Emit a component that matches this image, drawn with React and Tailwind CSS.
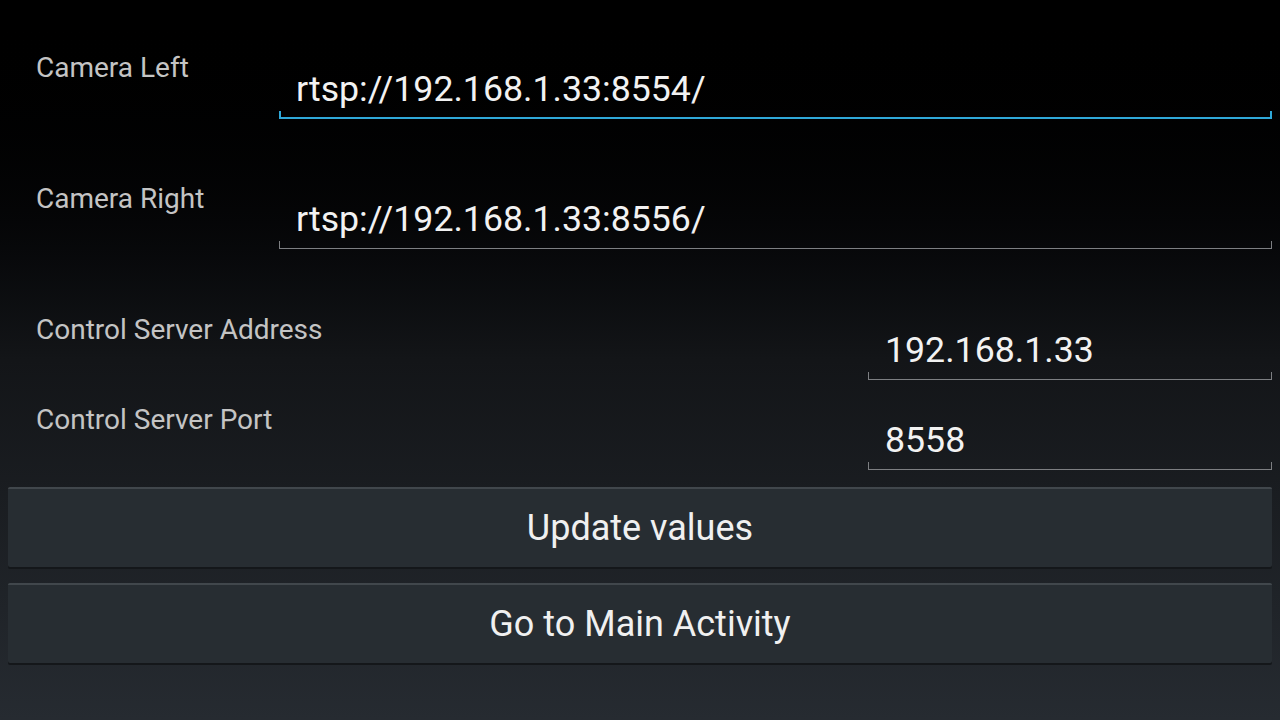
function Field({ value, focused, className }) {
  return (
    <div className={className}>
      <div className="pl-[17px] h-[44px] text-[35.7px] leading-[44px] text-[#f2f2f2] whitespace-nowrap">
        {value}
      </div>
      <div
        className={
          focused
            ? 'h-[8px] border-x-2 border-b-2 border-[#2fa8d8]'
            : 'h-[8px] border-x border-b border-[#7d7f82]'
        }
      />
    </div>
  );
}

function HoloButton({ label, className }) {
  return (
    <button
      className={
        'h-[80px] w-full flex items-center justify-center rounded-[2px] bg-[#272d32] border-t-2 border-[#41474c] shadow-[0_2px_0_#14171a] text-[36px] text-[#f0f0f0] ' +
        className
      }
    >
      {label}
    </button>
  );
}

export default function App() {
  return (
    <div
      className="w-[1280px] h-[720px] overflow-hidden bg-gradient-to-b from-[#000000] via-[#131518] to-[#262b31] pr-[8px]"
      style={{ fontFamily: 'Roboto, "Noto Sans", sans-serif' }}
    >
      {/* Camera Left */}
      <div className="flex items-start pl-[36px] mt-[52px]">
        <div className="w-[243px] text-[28px] leading-[32px] text-[#c4c4c4]">Camera Left</div>
        <Field value="rtsp://192.168.1.33:8554/" focused className="flex-1 mt-[15px]" />
      </div>

      {/* Camera Right */}
      <div className="flex items-start pl-[36px] mt-[64px]">
        <div className="w-[243px] text-[28px] leading-[32px] text-[#c4c4c4]">Camera Right</div>
        <Field value="rtsp://192.168.1.33:8556/" className="flex-1 mt-[14px]" />
      </div>

      {/* Control Server Address */}
      <div className="flex items-start pl-[36px] mt-[65px]">
        <div className="flex-1 text-[28px] leading-[32px] text-[#c4c4c4]">Control Server Address</div>
        <Field value="192.168.1.33" className="w-[404px] mt-[14px]" />
      </div>

      {/* Control Server Port */}
      <div className="flex items-start pl-[36px] mt-[24px]">
        <div className="flex-1 text-[28px] leading-[32px] text-[#c4c4c4]">Control Server Port</div>
        <Field value="8558" className="w-[404px] mt-[14px]" />
      </div>

      <div className="pl-[8px] mt-[17px] flex flex-col gap-[16px]">
        <HoloButton label="Update values" />
        <HoloButton label="Go to Main Activity" />
      </div>
    </div>
  );
}
